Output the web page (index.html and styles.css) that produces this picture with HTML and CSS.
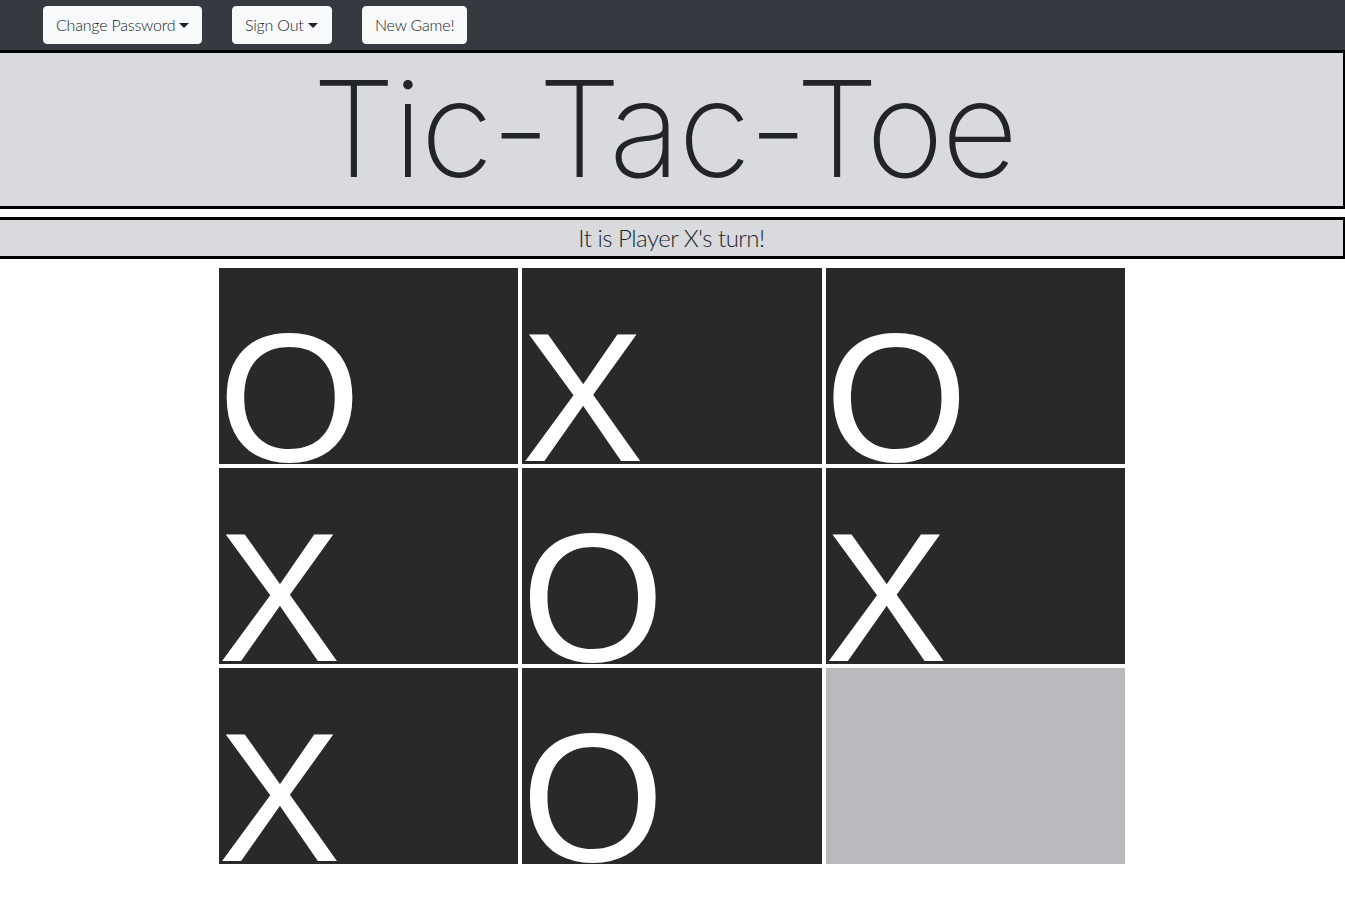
FILE: index.html
```html
<!DOCTYPE html>
<html lang="en">
<head>
  <meta charset="UTF-8" />
  <title>Tic-Tac-Toe</title>
  <link rel="stylesheet" href="styles.css">
</head>
<body>

<!-- Top bar -->
<nav class="navbar">
  <button class="btn btn-password caret">Change Password</button>
  <button class="btn btn-signout caret">Sign Out</button>
  <button class="btn btn-new">New Game!</button>
</nav>

<header class="banner">
  <h1 class="title">Tic-Tac-Toe</h1>
</header>

<div class="status">It is Player X's turn!</div>

<!-- Board -->
<main class="board">
  <div class="cell">O</div>
  <div class="cell">X</div>
  <div class="cell">O</div>
  <div class="cell">X</div>
  <div class="cell">O</div>
  <div class="cell">X</div>
  <div class="cell">X</div>
  <div class="cell">O</div>
  <div class="cell empty"></div>
</main>

</body>
</html>
```

FILE: styles.css
```css
* {
  margin: 0;
  padding: 0;
  box-sizing: border-box;
}

body {
  font-family: 'Lato', sans-serif;
  font-weight: 300;
  color: #212529;
  background-color: #fff;
}

/* Top bar */
.navbar {
  height: 50px;
  padding: 6px 0 6px 43px;
  display: flex;
  gap: 30px;
  background-color: #343a40;
}

.btn {
  height: 38px;
  padding: 0 12px 2px;
  font-family: inherit;
  font-weight: 300;
  font-size: 16px;
  letter-spacing: -0.2px;
  white-space: nowrap;
  text-align: left;
  color: #212529;
  background-color: #f8f9fa;
  border: 1px solid #f8f9fa;
  border-radius: 4px;
}

.btn-password { width: 159px; }
.btn-signout { width: 100px; }
.btn-new { width: 105px; }

.caret::after {
  content: '';
  display: inline-block;
  margin-left: 4px;
  vertical-align: 3px;
  border-top: 5px solid #212529;
  border-left: 5px solid transparent;
  border-right: 5px solid transparent;
}

/* Title and status */
.banner,
.status {
  border-top: 3px solid #000;
  border-bottom: 3px solid #000;
  border-right: 2px solid #000;
  background-color: #d9dadd;
  text-align: center;
}

.banner {
  height: 159px;
}

.title {
  padding-right: 15px;
  font-family: 'Inter', sans-serif;
  font-size: 133px;
  font-weight: 200;
  line-height: 151px;
  letter-spacing: -2.4px;
}

.status {
  height: 42px;
  margin-top: 8px;
  font-size: 24px;
  letter-spacing: -0.5px;
  line-height: 36px;
}

/* Board */
.board {
  width: 906px;
  margin: 9px 0 0 219px;
  display: grid;
  grid-template-columns: repeat(3, 1fr);
  grid-auto-rows: 196px;
  gap: 4px;
}

.cell {
  display: flex;
  align-items: flex-end;
  text-indent: -1px;
  font-family: 'Liberation Sans', sans-serif;
  font-weight: 400;
  font-size: 184px;
  line-height: 134px;
  color: #fff;
  background-color: #292929;
}

.cell.empty {
  background-color: #b9babd;
}
```
